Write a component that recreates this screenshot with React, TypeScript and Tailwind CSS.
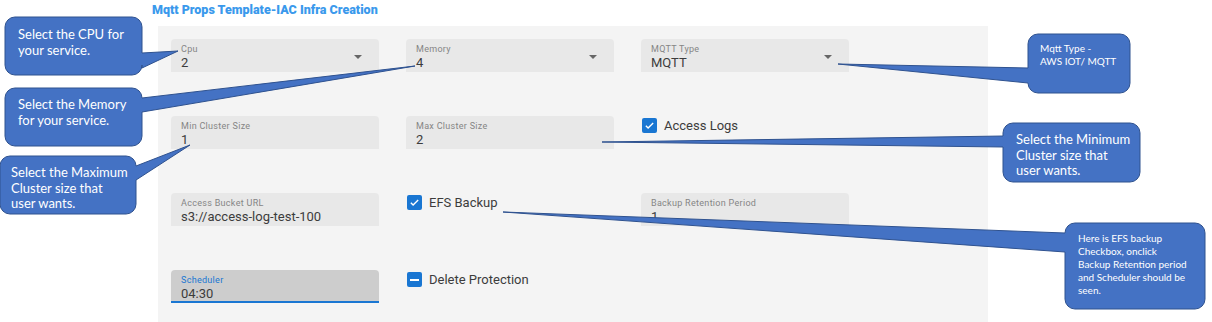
import React from "react";

type Side = "left" | "right";

interface Callout {
  x: number;
  y: number;
  w: number;
  h: number;
  side: Side;
  a: number;
  b: number;
  tx: number;
  ty: number;
}

function calloutPath(c: Callout) {
  const r = 10;
  const { x, y, w, h, a, b, tx, ty } = c;
  const x1 = x + w;
  const y1 = y + h;
  if (c.side === "right") {
    return `M${x + r},${y} H${x1 - r} A${r},${r} 0 0 1 ${x1},${y + r} V${a} L${tx},${ty} L${x1},${b} V${y1 - r} A${r},${r} 0 0 1 ${x1 - r},${y1} H${x + r} A${r},${r} 0 0 1 ${x},${y1 - r} V${y + r} A${r},${r} 0 0 1 ${x + r},${y} Z`;
  }
  return `M${x + r},${y} H${x1 - r} A${r},${r} 0 0 1 ${x1},${y + r} V${y1 - r} A${r},${r} 0 0 1 ${x1 - r},${y1} H${x + r} A${r},${r} 0 0 1 ${x},${y1 - r} V${b} L${tx},${ty} L${x},${a} V${y + r} A${r},${r} 0 0 1 ${x + r},${y} Z`;
}

const callouts: Callout[] = [
  { x: 5, y: 17, w: 137, h: 58, side: "right", a: 53, b: 68, tx: 178, ty: 51 },
  { x: 5, y: 88, w: 137, h: 58, side: "right", a: 98, b: 112, tx: 415, ty: 66 },
  { x: 0, y: 156, w: 136, h: 58, side: "right", a: 166, b: 180, tx: 190, ty: 145 },
  { x: 1028, y: 34, w: 102, h: 59, side: "left", a: 68, b: 83, tx: 838, ty: 64 },
  { x: 1003, y: 123, w: 137, h: 59, side: "left", a: 136, b: 147, tx: 602, ty: 142 },
  { x: 1065, y: 223, w: 140, h: 86, side: "left", a: 233, b: 252, tx: 503, ty: 212 },
];

function Field(props: { label: string; value: string; select?: boolean; focused?: boolean }) {
  return (
    <div
      className={`relative h-[33px] rounded-t-[4px] px-[10px] pt-[5px] ${
        props.focused ? "bg-[#cdcdcd] border-b-2 border-[#1976d2]" : "bg-[#e8e8e8]"
      }`}
    >
      <div
        className={`text-[9px] leading-[11px] tracking-[0.3px] ${
          props.focused ? "text-[#1976d2]" : "text-[#858585]"
        }`}
      >
        {props.label}
      </div>
      <div className="text-[13px] leading-[15px] text-[#3c3c3c]">{props.value}</div>
      {props.select && (
        <div className="absolute right-[17px] top-[16px] w-0 h-0 border-l-[4px] border-r-[4px] border-t-[4px] border-l-transparent border-r-transparent border-t-[#666]" />
      )}
    </div>
  );
}

function Check(props: { label: string; indeterminate?: boolean }) {
  return (
    <div className="flex items-center gap-[7px] pt-[2px] pl-[1px] h-[17px]">
      <div className="w-[15px] h-[15px] rounded-[2px] bg-[#1976d2] flex items-center justify-center shrink-0">
        {props.indeterminate ? (
          <div className="w-[9px] h-[2px] bg-white" />
        ) : (
          <svg width="11" height="11" viewBox="0 0 24 24">
            <path d="M4 12.5l5 5L20 6.5" fill="none" stroke="white" strokeWidth="3" />
          </svg>
        )}
      </div>
      <span className="text-[13px] leading-[15px] text-[#3c3c3c]">{props.label}</span>
    </div>
  );
}

export default function App() {
  return (
    <div className="relative w-[1212px] h-[322px] overflow-hidden bg-white font-['Roboto',sans-serif]">
      <div className="h-[26px] pl-[152px] pt-[3px] text-[12.5px] leading-[14px] font-black text-[#3a99ec]">
        Mqtt Props Template-IAC Infra Creation
      </div>
      <div className="ml-[158px] w-[830px] h-[296px] bg-[#f4f4f4] pt-[13px] pl-[13px] grid grid-cols-[208px_208px_208px] auto-rows-[33px] gap-x-[27px] gap-y-[44px]">
        <Field label="Cpu" value="2" select />
        <Field label="Memory" value="4" select />
        <Field label="MQTT Type" value="MQTT" select />

        <Field label="Min Cluster Size" value="1" />
        <Field label="Max Cluster Size" value="2" />
        <Check label="Access Logs" />

        <Field label="Access Bucket URL" value="s3://access-log-test-100" />
        <Check label="EFS Backup" />
        <Field label="Backup Retention Period" value="1" />

        <Field label="Scheduler" value="04:30" focused />
        <Check label="Delete Protection" indeterminate />
        <div />
      </div>

      <svg className="absolute left-0 top-0" width="1212" height="322">
        {callouts.map((c, i) => (
          <path key={i} d={calloutPath(c)} fill="#4472c4" stroke="#2f528f" strokeWidth="1" />
        ))}
      </svg>

      <div className="absolute left-[18px] top-[26px] text-[13px] leading-[16px] text-white font-['Lato',sans-serif]">
        Select the CPU for
        <br />
        your service.
      </div>
      <div className="absolute left-[18px] top-[96px] text-[13px] leading-[16px] text-white font-['Lato',sans-serif]">
        Select the Memory
        <br />
        for your service.
      </div>
      <div className="absolute left-[11px] top-[165px] text-[13px] leading-[15.5px] text-white font-['Lato',sans-serif]">
        Select the Maximum
        <br />
        Cluster size that
        <br />
        user wants.
      </div>
      <div className="absolute left-[1040px] top-[42px] text-[10px] leading-[13px] text-white font-['Lato',sans-serif]">
        Mqtt Type -
        <br />
        AWS IOT/ MQTT
      </div>
      <div className="absolute left-[1016px] top-[132px] text-[13px] leading-[15.5px] text-white font-['Lato',sans-serif]">
        Select the Minimum
        <br />
        Cluster size that
        <br />
        user wants.
      </div>
      <div className="absolute left-[1078px] top-[232px] text-[10px] leading-[13px] text-white font-['Lato',sans-serif]">
        Here is EFS backup
        <br />
        Checkbox, onclick
        <br />
        Backup Retention period
        <br />
        and Scheduler should be
        <br />
        seen.
      </div>
    </div>
  );
}
